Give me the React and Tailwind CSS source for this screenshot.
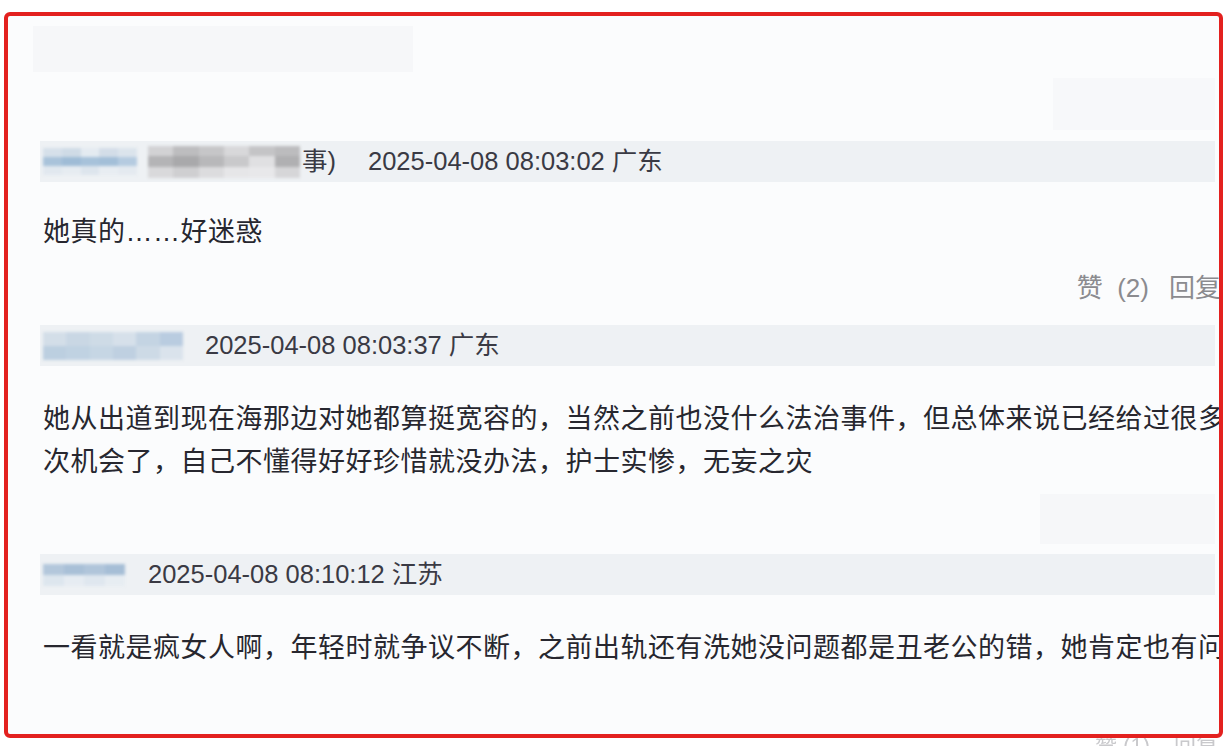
const cjk = { fontFamily: '"Liberation Sans", "Noto Sans CJK SC", sans-serif' }

function Mosaic({ cells, className }) {
  // blurred username placeholder, a row of soft tiles
  return (
    <div className={"flex flex-col blur-[1.5px] " + className}>
      {cells.map((row, i) => (
        <div key={i} className="flex flex-1">
          {row.map((c, j) => (
            <div key={j} className="flex-1" style={{ background: c }} />
          ))}
        </div>
      ))}
    </div>
  )
}

function MetaBar({ children }) {
  return (
    <div className="flex items-center h-[41px] bg-[#eef1f4] pl-[3px] text-[25.5px] text-[#3a3a44] whitespace-nowrap">
      {children}
    </div>
  )
}

export default function App() {
  return (
    <div className="w-[1228px] h-[746px] bg-white overflow-hidden" style={cjk}>
      <div className="ml-[4px] mt-[12px] w-[1219px] h-[726px] border-[4px] border-[#e3211f] rounded-[6px] bg-[#fbfcfd] overflow-hidden pl-[32px] pr-[4px]">
        <div className="flex justify-between pt-[10px]">
          <div className="w-[380px] h-[46px] bg-[#f6f7f9] -ml-[7px]" />
          <div className="w-[162px] h-[52px] bg-[#f7f8fa] mt-[52px]" />
        </div>

        <div className="mt-[11px]">
          <MetaBar>
            <Mosaic
              className="w-[94px] h-[28px]"
              cells={[
                ['#d6e0ea', '#cfdbe6', '#e4ebf1', '#d3dde8', '#dbe4ec'],
                ['#a9c3da', '#9fbcd6', '#a7c2da', '#a3bfd8', '#b5cbe0'],
                ['#e1e8ef', '#e6ecf1', '#dde5ed', '#e8edf2', '#e4eaf0'],
              ]}
            />
            <Mosaic
              className="w-[152px] h-[32px] ml-[11px]"
              cells={[
                ['#d2d2d4', '#bdbdbf', '#c6c6c8', '#d8d8da', '#c4c4c6', '#bcbcbe'],
                ['#b4b4b6', '#a9a9ab', '#b8b8ba', '#c9c9cb', '#e0e0e2', '#b0b0b2'],
                ['#d9d9db', '#cfcfd1', '#dcdcde', '#e6e6e8', '#e8e8ea', '#d6d6d8'],
              ]}
            />
            <span className="ml-[2px]">事)</span>
            <span className="ml-[32px]">2025-04-08 08:03:02 广东</span>
          </MetaBar>
        </div>

        <p className="mt-[29px] text-[27px] leading-[43px] tracking-[0.5px] text-[#27272f] whitespace-nowrap pl-[3px]">
          她真的……好迷惑
        </p>

        <div className="flex justify-end mt-[16px] -mr-[6px] text-[26px] leading-[36px] text-[#8b8b8f] whitespace-nowrap">
          <span>赞&nbsp;&nbsp;(2)</span>
          <span className="ml-[20px]">回复</span>
        </div>

        <div className="mt-[19px]">
          <MetaBar>
            <Mosaic
              className="w-[140px] h-[28px]"
              cells={[
                ['#d3dee8', '#c9d7e4', '#cedbe6', '#d6e0ea', '#c4d4e3', '#b9cce0'],
                ['#bccfe0', '#c0d2e2', '#c6d6e4', '#bfd0e1', '#cddae6', '#dae3ec'],
              ]}
            />
            <span className="ml-[22px]">2025-04-08 08:03:37 广东</span>
          </MetaBar>
        </div>

        <div className="mt-[32px] text-[27px] leading-[43px] tracking-[0.5px] text-[#27272f] whitespace-nowrap pl-[3px]">
          <p>她从出道到现在海那边对她都算挺宽容的，当然之前也没什么法治事件，但总体来说已经给过很多</p>
          <p>次机会了，自己不懂得好好珍惜就没办法，护士实惨，无妄之灾</p>
        </div>

        <div className="flex justify-end mt-[10px]">
          <div className="w-[175px] h-[50px] bg-[#f6f7f9]" />
        </div>

        <div className="mt-[10px]">
          <MetaBar>
            <Mosaic
              className="w-[82px] h-[22px]"
              cells={[
                ['#b3c7db', '#a9c0d7', '#b0c5da', '#a6bed6'],
                ['#dde6ee', '#e6ecf2', '#dfe7ef', '#e7edf2'],
              ]}
            />
            <span className="ml-[23px]">2025-04-08 08:10:12 江苏</span>
          </MetaBar>
        </div>

        <p className="mt-[32px] text-[27px] leading-[43px] tracking-[0.5px] text-[#27272f] whitespace-nowrap pl-[3px]">
          一看就是疯女人啊，年轻时就争议不断，之前出轨还有洗她没问题都是丑老公的错，她肯定也有问题
        </p>
      </div>
      <div className="flex justify-end pr-[10px] h-[8px] overflow-hidden text-[22px] leading-[22px] text-[#c9c9cc] blur-[0.6px]">
        <span className="-mt-[3px]">赞 (1)</span>
        <span className="-mt-[3px] ml-[24px]">回复</span>
      </div>
    </div>
  )
}
